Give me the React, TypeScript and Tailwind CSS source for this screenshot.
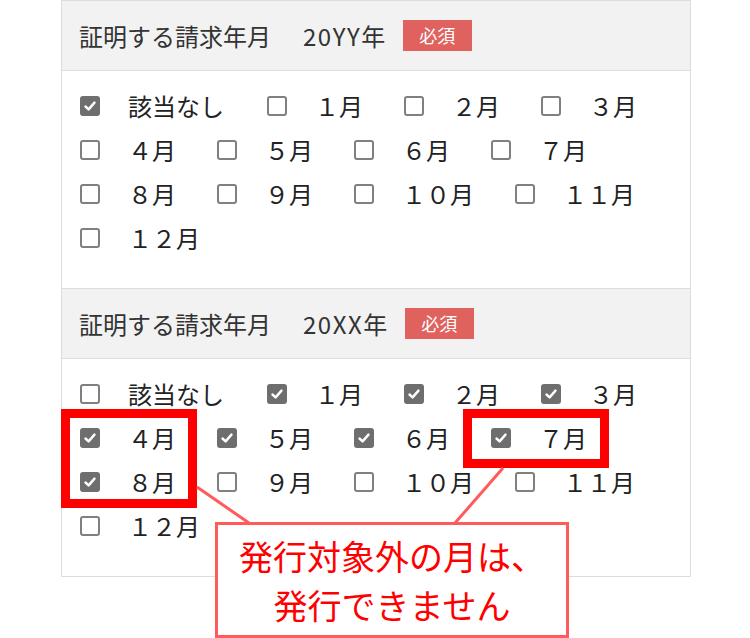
import React from "react";

type Item = { label: string; checked: boolean };

const yearYY: Item[] = [
	{ label: "該当なし", checked: true },
	{ label: "１月", checked: false },
	{ label: "２月", checked: false },
	{ label: "３月", checked: false },
	{ label: "４月", checked: false },
	{ label: "５月", checked: false },
	{ label: "６月", checked: false },
	{ label: "７月", checked: false },
	{ label: "８月", checked: false },
	{ label: "９月", checked: false },
	{ label: "１０月", checked: false },
	{ label: "１１月", checked: false },
	{ label: "１２月", checked: false },
];

const yearXX: Item[] = [
	{ label: "該当なし", checked: false },
	{ label: "１月", checked: true },
	{ label: "２月", checked: true },
	{ label: "３月", checked: true },
	{ label: "４月", checked: true },
	{ label: "５月", checked: true },
	{ label: "６月", checked: true },
	{ label: "７月", checked: true },
	{ label: "８月", checked: true },
	{ label: "９月", checked: false },
	{ label: "１０月", checked: false },
	{ label: "１１月", checked: false },
	{ label: "１２月", checked: false },
];

function CheckBox({ checked }: { checked: boolean }) {
	return checked ? (
		<span className="flex h-[20px] w-[20px] shrink-0 items-center justify-center rounded-[3px] border-2 border-[#6e6e6e] bg-[#6e6e6e]">
			<svg width="14" height="14" viewBox="0 0 14 14" fill="none">
				<path
					d="M2.5 7.5 L5.6 10.4 L11.5 3.6"
					stroke="white"
					strokeWidth="2.4"
					strokeLinecap="round"
					strokeLinejoin="round"
				/>
			</svg>
		</span>
	) : (
		<span className="block h-[20px] w-[20px] shrink-0 rounded-[3px] border-2 border-[#808080] bg-white" />
	);
}

function Section({ year, items }: { year: string; items: Item[] }) {
	return (
		<div>
			{/* Header */}
			<div className="flex h-[70px] items-center border-b border-[#dcdcdc] bg-[#f2f2f2] pl-[17px] text-[24px] text-[#333]">
				<span>証明する請求年月</span>
				<span className="ml-[32px] tracking-[1.5px]">{year}</span>
				<span className="ml-[16px] flex h-[31px] w-[69px] items-center justify-center bg-[#e0625e] text-[18px] text-white">
					必須
				</span>
			</div>

			{/* Months */}
			<div className="flex flex-wrap border-b border-[#dcdcdc] pt-[13px] pb-[28px] pl-[18px] text-[24px] text-[#222]">
				{items.map((item) => (
					<label
						key={item.label}
						className={
							item.label === "該当なし"
								? "flex h-[44px] items-center mr-[43px]"
								: "flex h-[44px] items-center mr-[41px]"
						}
					>
						<CheckBox checked={item.checked} />
						<span className="ml-[28px] leading-none">{item.label}</span>
					</label>
				))}
			</div>
		</div>
	);
}

export default function App() {
	return (
		<div
			className="relative h-[638px] w-[750px] overflow-hidden bg-white"
			style={{ fontFamily: '"Noto Sans CJK JP", "Noto Sans", sans-serif' }}
		>
			<div className="ml-[61px] w-[630px] border-x border-t border-[#dcdcdc]">
				<Section year="20YY年" items={yearYY} />
				<Section year="20XX年" items={yearXX} />
			</div>

			{/* Annotations */}
			<div className="absolute left-[61px] top-[409px] h-[99px] w-[136px] border-[9px] border-[#ff0000]" />
			<div className="absolute left-[463px] top-[409px] h-[59px] w-[146px] border-[9px] border-[#ff0000]" />

			<svg
				className="absolute left-0 top-0"
				width="750"
				height="638"
				viewBox="0 0 750 638"
			>
				<line x1="197" y1="487" x2="249" y2="523" stroke="#ff5b5b" strokeWidth="3" />
				<line x1="503" y1="468" x2="455" y2="523" stroke="#ff5b5b" strokeWidth="3" />
			</svg>

			<div className="absolute left-[215px] top-[522px] flex h-[116px] w-[354px] flex-col items-center justify-center border-[3px] border-[#ff5b5b] bg-white text-[34px] leading-[49px] text-[#ff0000]">
				<span>発行対象外の月は、</span>
				<span>発行できません</span>
			</div>
		</div>
	);
}
